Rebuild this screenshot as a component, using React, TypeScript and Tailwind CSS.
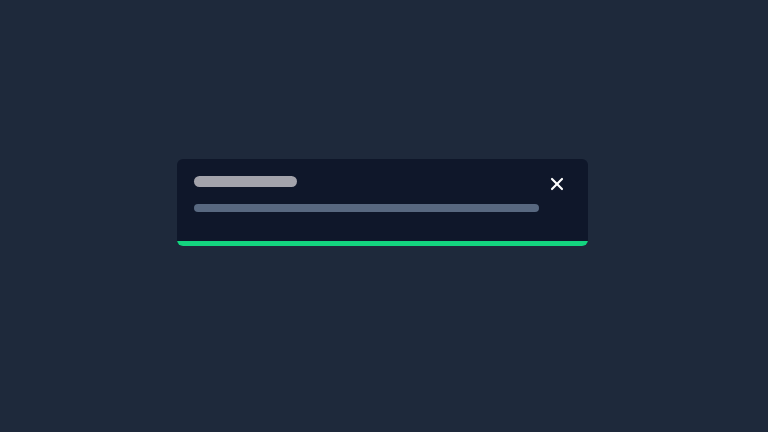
import { X } from 'lucide-react'

export default function App() {
  return (
    <div className="min-h-screen w-full bg-[#1e293b] pt-[159px] pl-[177px]" style={{ fontFamily: 'Inter, "Liberation Sans", sans-serif' }}>
      <div className="w-[411px] overflow-hidden rounded-md bg-[#0f172a]">
        <div className="flex items-start pl-[17px] pr-[21px] pt-[17px] pb-[29px]">
          {/* Skeleton text */}
          <div className="flex w-[345px] flex-col">
            <div className="h-[11px] w-[103px] rounded-full bg-[#a3a3ab]" />
            <div className="mt-[17px] h-[8px] w-[345px] rounded-full bg-[#586880]" />
          </div>
          <button className="ml-auto -mt-[2px] flex h-[20px] w-[20px] items-center justify-center text-white">
            <X size={20} strokeWidth={2.6} />
          </button>
        </div>
        {/* Progress */}
        <div className="h-[5px] w-full bg-[#14d47f]" />
      </div>
    </div>
  )
}
